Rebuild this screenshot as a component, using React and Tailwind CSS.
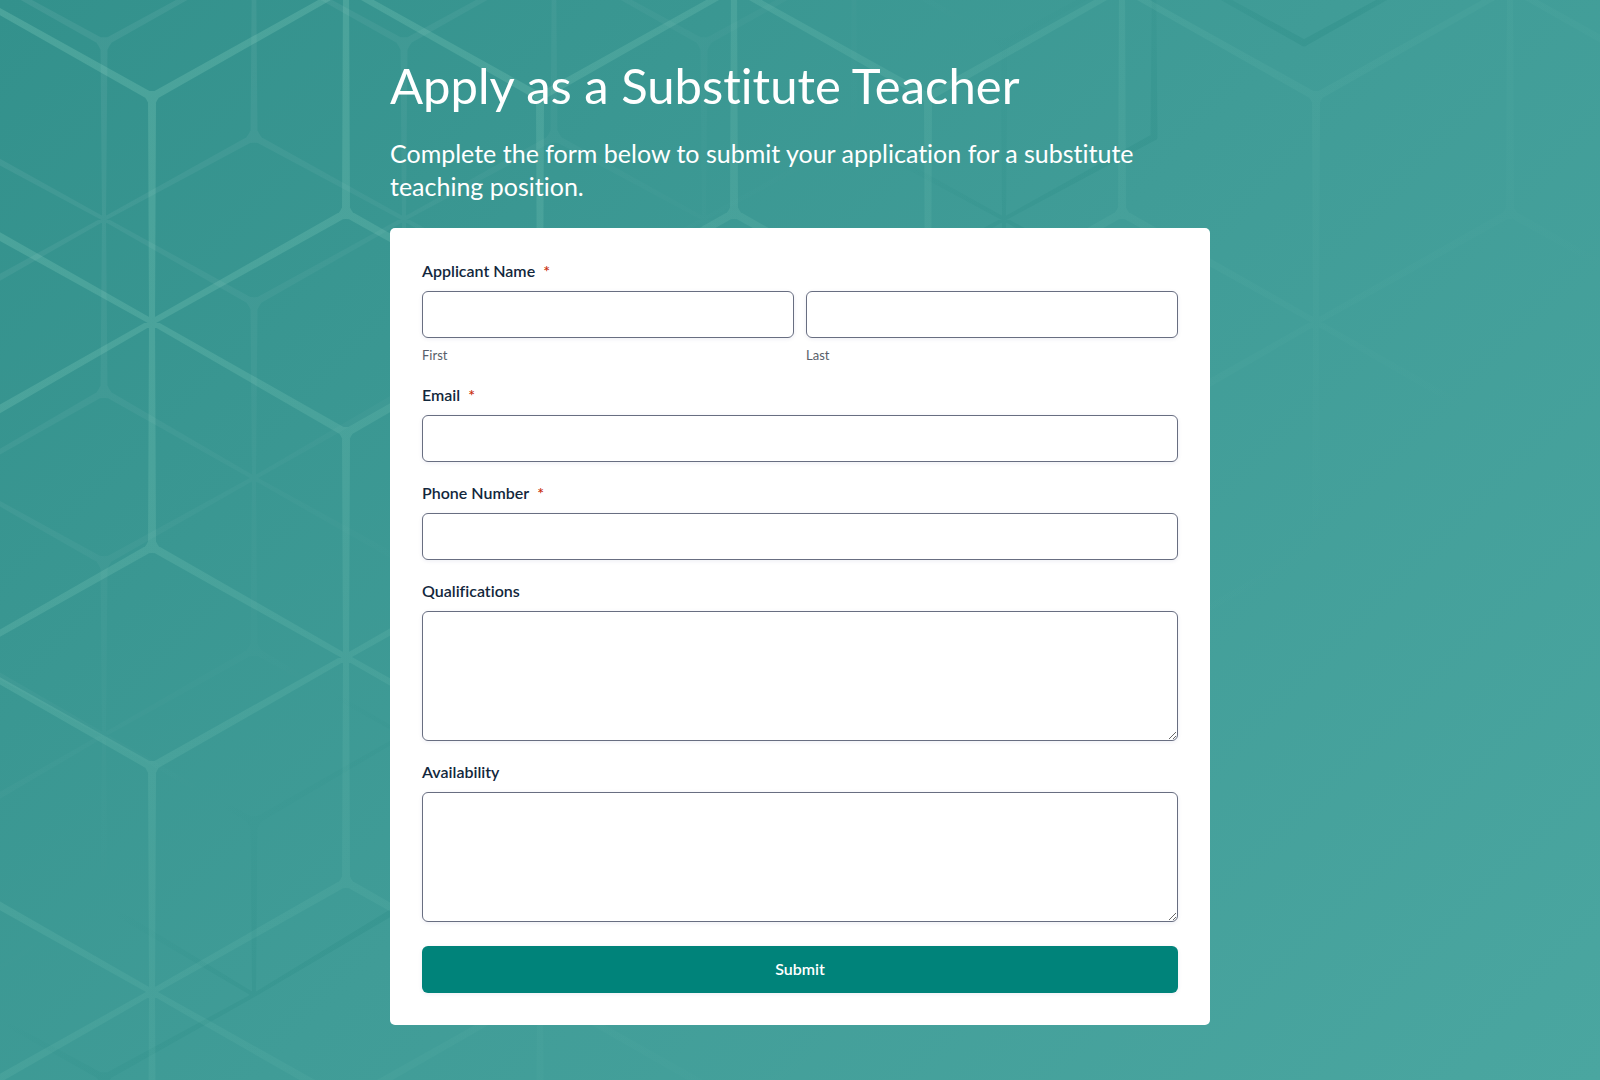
// Cube lattice: columns alternate between two vertex lists, shifted by half a cell.
// Every third vertex of a column is a hub where six struts meet.
const BRIGHT = {
  x0: -430,
  dx: 194,
  cols: 12,
  even: [-342, -232, -12, 213, 433, 657, 882, 1102, 1322],
  odd: [-338, -118, 97, 322, 547, 767, 992, 1217, 1437],
  evenHub: 2,
  oddHub: 0,
  joint: 8,
  hub: 6,
  skip: [],
}

const DIM = {
  x0: -196,
  dx: 150,
  cols: 12,
  even: [-297, -127, 43, 219, 392, 562, 735, 905, 1078, 1251],
  odd: [-213, -40, 137, 303, 478, 650, 822, 995, 1168, 1341],
  evenHub: 0,
  oddHub: 1,
  joint: 7,
  hub: 4,
  // struts left out, as "hub column:y>joint column:y"
  skip: ['3:995>3:1168', '3:995>4:1078', '10:219>10:43', '10:219>9:137'],
}

function strut(a, b, wa, wb) {
  const len = Math.hypot(b.x - a.x, b.y - a.y)
  const nx = -(b.y - a.y) / len / 2
  const ny = (b.x - a.x) / len / 2
  return `M${a.x + nx * wa} ${a.y + ny * wa}L${b.x + nx * wb} ${b.y + ny * wb}L${b.x - nx * wb} ${b.y - ny * wb}L${a.x - nx * wa} ${a.y - ny * wa}Z`
}

function dot(c, w) {
  const r = w / 2
  return `M${c.x - r} ${c.y}a${r} ${r} 0 1 0 ${w} 0a${r} ${r} 0 1 0 ${-w} 0Z`
}

function fillet(c, arms) {
  const pts = arms
    .map(p => Math.atan2(p.y - c.y, p.x - c.x))
    .sort((p, q) => q - p)
    .map(a => `${c.x + Math.cos(a) * 24} ${c.y + Math.sin(a) * 24}`)
  return `M${pts[0]}Q${c.x} ${c.y} ${pts[1]}Q${c.x} ${c.y} ${pts[2]}Q${c.x} ${c.y} ${pts[0]}Z`
}

function latticePath(l) {
  const nodes = []
  for (let col = 0; col < l.cols; col++) {
    const odd = col % 2 === 1
    const ys = odd ? l.odd : l.even
    const hub = odd ? l.oddHub : l.evenHub
    ys.forEach((y, i) => nodes.push({ x: l.x0 + col * l.dx, y, hub: i % 3 === hub, col }))
  }
  let d = ''
  const arms = new Map(nodes.map(n => [n, []]))
  const reach = l.dx * 1.3
  nodes.filter(n => n.hub).forEach(h => {
    nodes.forEach(n => {
      if (n.hub || Math.abs(n.col - h.col) > 1) return
      if (Math.hypot(n.x - h.x, n.y - h.y) > reach) return
      if (l.skip.includes(`${h.col}:${h.y}>${n.col}:${n.y}`)) return
      d += strut(h, n, l.hub, l.joint)
      arms.get(n).push(h)
    })
  })
  arms.forEach((list, n) => {
    if (list.length === 3) d += fillet(n, list)
    else if (list.length === 2) d += dot(n, l.joint)
  })
  return d
}

const BRIGHT_PATH = latticePath(BRIGHT)
const DIM_PATH = latticePath(DIM)

function Backdrop() {
  return (
    <svg
      className="absolute inset-0 w-full h-full"
      viewBox="0 0 1600 1080"
      preserveAspectRatio="xMidYMid slice"
      aria-hidden="true"
    >
      <defs>
        <linearGradient id="base" gradientUnits="userSpaceOnUse" x1="0" y1="0" x2="1340" y2="1340">
          <stop offset="0" stopColor="#33918c" />
          <stop offset="0.5" stopColor="#409c97" />
          <stop offset="1" stopColor="#4aa6a0" />
        </linearGradient>
        {/* both fades run along the x + y diagonal */}
        <linearGradient id="bright" gradientUnits="userSpaceOnUse" x1="0" y1="0" x2="950" y2="950">
          <stop offset="0" stopColor="#b8f5dc" stopOpacity="0.18" />
          <stop offset="0.3" stopColor="#b8f5dc" stopOpacity="0.14" />
          <stop offset="0.55" stopColor="#b8f5dc" stopOpacity="0.08" />
          <stop offset="0.8" stopColor="#b8f5dc" stopOpacity="0.03" />
          <stop offset="1" stopColor="#b8f5dc" stopOpacity="0" />
        </linearGradient>
        <linearGradient id="dim" gradientUnits="userSpaceOnUse" x1="0" y1="0" x2="720" y2="720">
          <stop offset="0" stopColor="#ffffff" stopOpacity="0.07" />
          <stop offset="0.4" stopColor="#ffffff" stopOpacity="0.04" />
          <stop offset="0.7" stopColor="#ffffff" stopOpacity="0" />
          <stop offset="0.71" stopColor="#1c817b" stopOpacity="0" />
          <stop offset="0.86" stopColor="#1c817b" stopOpacity="0.15" />
          <stop offset="0.95" stopColor="#1c817b" stopOpacity="0.22" />
          <stop offset="1" stopColor="#1c817b" stopOpacity="0" />
        </linearGradient>
      </defs>
      <rect width="1600" height="1080" fill="url(#base)" />
      <path d={DIM_PATH} fill="url(#dim)" />
      <path d={BRIGHT_PATH} fill="url(#bright)" />
    </svg>
  )
}

const CONTROL = 'block w-full rounded-md border border-[#686e81] bg-white px-3 text-base text-[#0f2940] shadow-[0_1px_4px_rgba(18,25,97,0.08)]'

function Label({ htmlFor, required, children }) {
  return (
    <label htmlFor={htmlFor} className="block mb-[13px] text-base leading-[14px] font-semibold text-[#12273c]">
      {children}
      {required && <span className="ml-2 text-[#c92d0c]">*</span>}
    </label>
  )
}

function NamePart({ id, label }) {
  return (
    <div className="flex-1 min-w-0">
      <input id={id} type="text" required className={`${CONTROL} h-[47px]`} />
      <label htmlFor={id} className="block mt-2.5 pb-0.5 text-[13px] leading-[14px] text-[#585e6a]">
        {label}
      </label>
    </div>
  )
}

export default function App() {
  return (
    <div className="relative min-h-screen bg-[#409c97] font-['Lato',sans-serif] [font-variant-ligatures:no-common-ligatures]">
      <Backdrop />
      <main className="relative mx-auto max-w-[820px] pt-[55px] pb-[55px]">
        <h1 className="text-[49px] leading-[60px] text-white">Apply as a Substitute Teacher</h1>
        <p className="mt-[22px] mb-[25px] text-[25px] leading-[33px] text-white">
          Complete the form below to submit your application for a substitute teaching position.
        </p>

        <form className="flex flex-col gap-6 rounded-[5px] bg-white px-8 pt-9 pb-8" onSubmit={e => e.preventDefault()}>
          <div>
            <Label htmlFor="first-name" required>Applicant Name</Label>
            <div className="flex gap-3">
              <NamePart id="first-name" label="First" />
              <NamePart id="last-name" label="Last" />
            </div>
          </div>
          <div>
            <Label htmlFor="email" required>Email</Label>
            <input id="email" type="email" required className={`${CONTROL} h-[47px]`} />
          </div>
          <div>
            <Label htmlFor="phone" required>Phone Number</Label>
            <input id="phone" type="tel" required className={`${CONTROL} h-[47px]`} />
          </div>
          <div>
            <Label htmlFor="qualifications">Qualifications</Label>
            <textarea id="qualifications" className={`${CONTROL} h-[130px] py-2`} />
          </div>
          <div>
            <Label htmlFor="availability">Availability</Label>
            <textarea id="availability" className={`${CONTROL} h-[130px] py-2`} />
          </div>
          <button
            type="submit"
            className="h-[47px] rounded-md bg-[#00837a] pb-0.5 text-base font-semibold text-white shadow-[0_1px_4px_rgba(18,25,97,0.08)] hover:bg-[#00766e]"
          >
            Submit
          </button>
        </form>
      </main>
    </div>
  )
}
